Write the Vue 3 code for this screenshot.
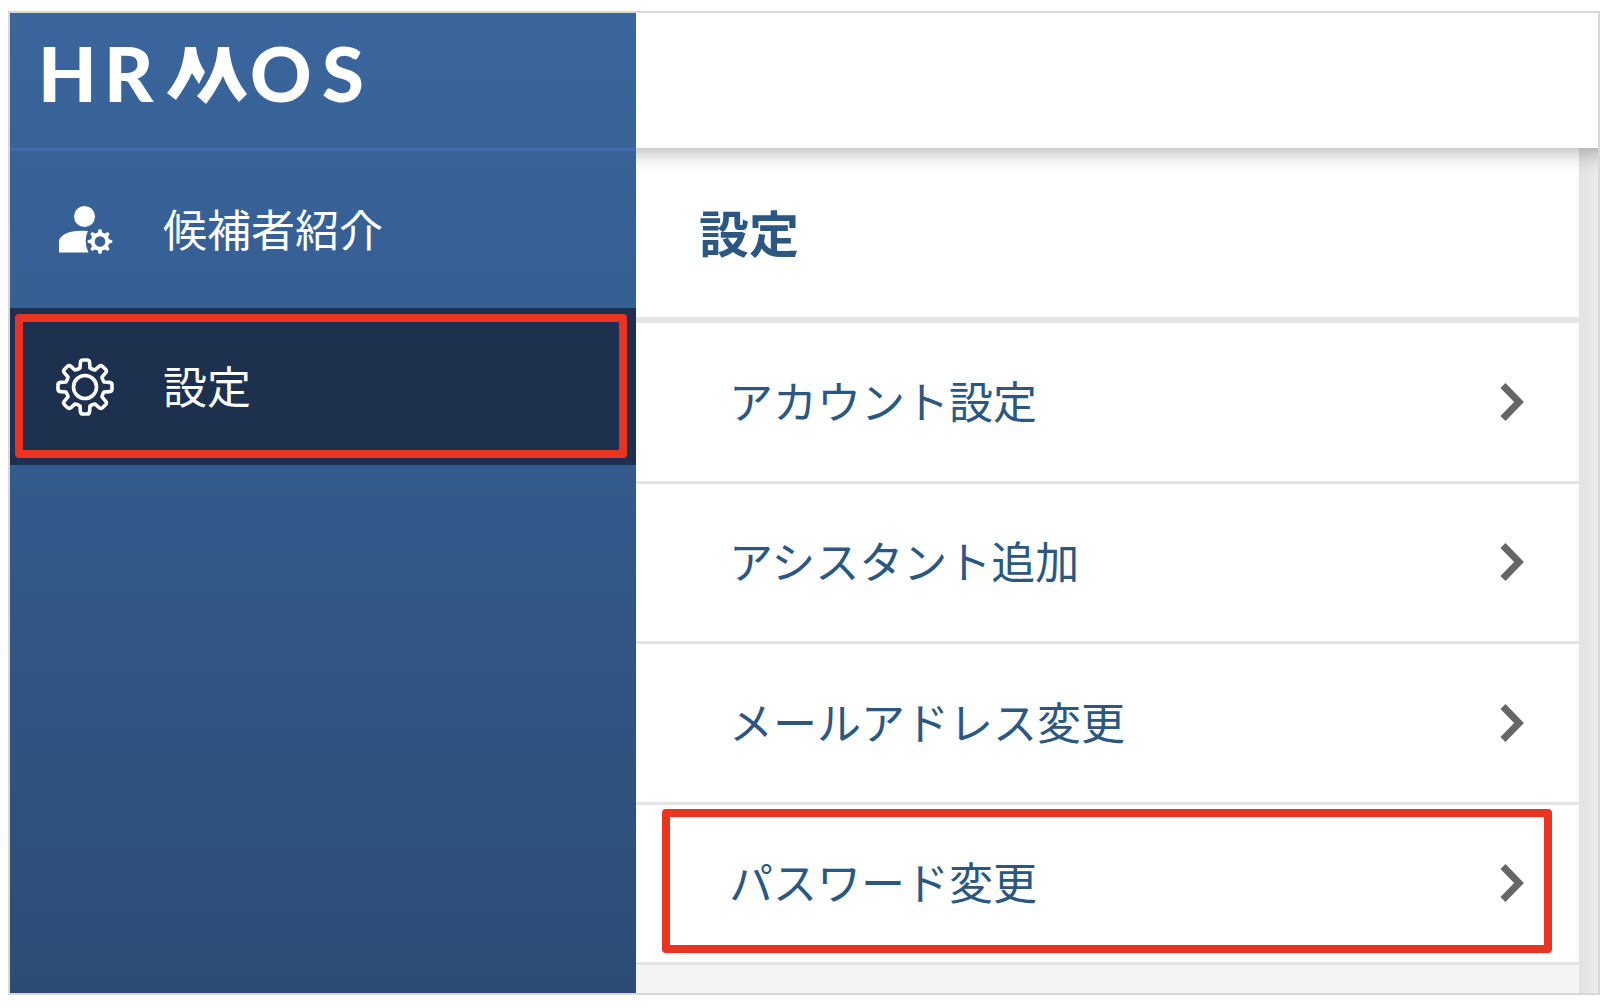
<script setup>
const menu = [
  { label: 'アカウント設定' },
  { label: 'アシスタント追加' },
  { label: 'メールアドレス変更' },
  { label: 'パスワード変更', marked: true },
]

// Outline of an eight-toothed cog centred on 0,0
function cog() {
  const at = (x, y, a) => {
    const c = Math.cos(a)
    const s = Math.sin(a)
    return `${(x * c - y * s).toFixed(2)} ${(x * s + y * c).toFixed(2)}`
  }
  let d = ''
  for (let i = 0; i < 8; i++) {
    const a = (i * Math.PI) / 4
    const p = (x, y) => at(x, y, a)
    d += `${i ? 'L' : 'M'}${p(-5, -19)}L${p(-4.6, -24.5)}Q${p(-4.4, -27)} ${p(-2, -27)}`
    d += `L${p(2, -27)}Q${p(4.4, -27)} ${p(4.6, -24.5)}L${p(5, -19)}`
    d += `Q${p(7.3, -17.4)} ${at(-5, -19, a + Math.PI / 4)}`
  }
  return d + 'Z'
}
const cogPath = cog()
</script>

<template>
  <div class="frame">
    <aside class="sidebar">
      <a class="brand" href="#" aria-label="HRMOS">
        <svg width="350" height="100" viewBox="30 24 350 100" aria-hidden="true">
          <g class="brand-letters">
            <text x="38" y="102">H</text>
            <text x="104" y="102">R</text>
            <text x="250" y="102">O</text>
            <text x="322" y="102">S</text>
          </g>
          <path
            fill="#fff"
            d="M185 47H196Q197 60 205 72L199 84L192 73Q186 86 176 100L167 93Q183 74 185 47ZM218 47H229Q231 74 247 94L239 102Q229 91 223 76Q216 91 206 104L197 96Q216 75 218 47Z"
          />
        </svg>
      </a>
      <nav>
        <a class="nav-item" href="#">
          <svg class="nav-icon" width="60" height="60" viewBox="-30 -30 60 60" aria-hidden="true">
            <g fill="#fff">
              <circle cx="-0.5" cy="-13.5" r="10.5" />
              <path d="M-26 22.5V12Q-26 7-20 4Q-12 0 3 1Q-2 11 3.5 22.5Z" />
              <g transform="translate(15 11.5)">
                <circle r="7.3" fill="none" stroke="#fff" stroke-width="4" />
                <path
                  v-for="n in 8"
                  :key="n"
                  d="M-2.6-8L-1.3-12.3H1.3L2.6-8Z"
                  :transform="`rotate(${n * 45})`"
                />
              </g>
            </g>
          </svg>
          <span>候補者紹介</span>
        </a>
        <a class="nav-item active" href="#" aria-current="page">
          <svg class="nav-icon" width="60" height="60" viewBox="-30 -30 60 60" aria-hidden="true">
            <g fill="none" stroke="#fff" stroke-width="3.6" stroke-linejoin="round">
              <path :d="cogPath" />
              <circle r="11.5" />
            </g>
          </svg>
          <span>設定</span>
        </a>
      </nav>
    </aside>

    <div class="main">
      <header class="topbar"></header>
      <div class="body">
        <main class="panel">
          <h1>設定</h1>
          <ul>
            <li v-for="item in menu" :key="item.label" :class="{ marked: item.marked }">
              <a href="#">
                <span>{{ item.label }}</span>
                <svg width="24" height="40" viewBox="0 0 24 40" aria-hidden="true">
                  <path d="M3 3.5L19 20L3 36.5" fill="none" stroke="#666" stroke-width="7" />
                </svg>
              </a>
            </li>
          </ul>
        </main>
        <div class="gutter"></div>
      </div>
    </div>
  </div>
</template>

<style>
body {
  background: #fff;
}
</style>

<style scoped>
.frame {
  box-sizing: border-box;
  display: flex;
  height: calc(100vh - 24px);
  margin: 11px 14px 13px 8px;
  border: 2px solid #d8d8d8;
  overflow: hidden;
  font-family: "Noto Sans CJK JP", sans-serif;
  font-size: 44px;
  line-height: 60px;
}
.sidebar {
  position: relative;
  z-index: 2;
  flex: 0 0 626px;
  background: linear-gradient(#3a669d, #355e92 34%, #2c4c75);
}
.brand {
  box-sizing: border-box;
  display: block;
  height: 138px;
  padding: 11px 20px 0;
  border-bottom: 3px solid #3e6dae;
}
.brand svg {
  display: block;
}
.brand-letters {
  fill: #fff;
  font-family: Lato, sans-serif;
  font-size: 76px;
  font-weight: 900;
}
.nav-item {
  position: relative;
  display: flex;
  align-items: center;
  gap: 48px;
  height: 157px;
  padding-left: 45px;
  color: #fff;
  text-decoration: none;
}
.nav-item span,
li span {
  padding-bottom: 4px;
}
.nav-icon {
  flex: none;
}
.active {
  background: #1d304d;
}
.active::after,
.marked::after {
  content: "";
  position: absolute;
  border: 8px solid #ea3323;
  border-radius: 4px;
  pointer-events: none;
}
.active::after {
  inset: 6px 9px 7px 5px;
}
.main {
  flex: 1;
  display: flex;
  flex-direction: column;
  min-width: 0;
}
.topbar {
  position: relative;
  z-index: 1;
  flex: 0 0 135px;
  margin: 0 -24px;
  background: #fff;
  box-shadow: 0 4px 20px rgba(0, 0, 0, 0.3);
}
.body {
  flex: 1;
  display: flex;
}
.panel {
  flex: 1;
  display: flex;
  flex-direction: column;
  padding-bottom: 28px;
  background: #f4f4f4;
}
h1 {
  box-sizing: border-box;
  height: 175px;
  margin: 0;
  padding: 53px 63px 0;
  background: #fff;
  border-bottom: 6px solid #e5e5e5;
  color: #2b5780;
  font-size: 50px;
  font-weight: 700;
  line-height: 60px;
}
ul {
  flex: 1;
  display: flex;
  flex-direction: column;
  margin: 0;
  padding: 0;
  list-style: none;
}
li {
  position: relative;
  flex: 1;
  display: flex;
  background: #fff;
  border-bottom: 3px solid #e5e5e5;
}
li a {
  flex: 1;
  display: flex;
  align-items: center;
  justify-content: space-between;
  padding: 0 55px 0 93px;
  color: #2b5780;
  text-decoration: none;
}
.marked::after {
  inset: 4px 27px 9px 26px;
}
.gutter {
  flex: 0 0 19px;
  background: linear-gradient(90deg, #e2e2e2, #ebebeb);
}
</style>
